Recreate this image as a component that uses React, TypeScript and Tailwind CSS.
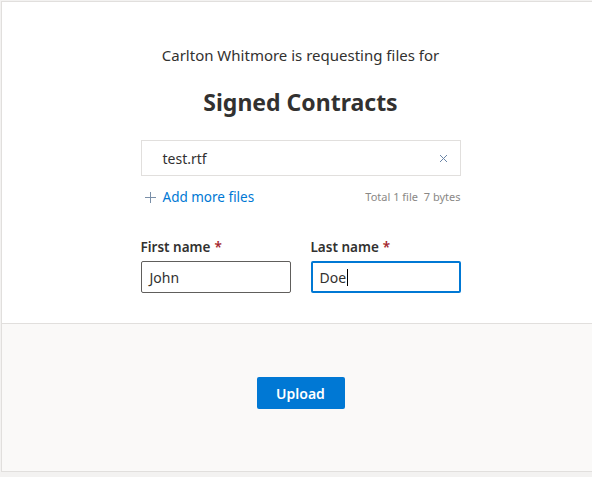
import React from "react";

const font = { fontFamily: '"Noto Sans", "Open Sans", sans-serif' };

const Required = () => <span className="ml-1 text-[#a4262c]">*</span>;

export default function App() {
  return (
    <div className="h-[477px] w-[592px] overflow-hidden bg-[#f3f2f1] pl-px pt-px" style={font}>
      <div className="w-[598px] border border-r-0 border-[#e1dfdd] bg-white">
        <div className="flex flex-col items-center pb-[30px] pt-[43px]">
          <p className="text-[15px] leading-5 text-[#323130]">Carlton Whitmore is requesting files for</p>
          <h1 className="mt-[23px] text-[23px] font-bold leading-7 text-[#323130]">Signed Contracts</h1>

          <div className="mt-[24px] w-[320px]">
            <div className="flex h-9 items-center justify-between border border-[#e1dfdd] pl-[21px] pr-[12px]">
              <span className="text-[14px] text-[#323130]">test.rtf</span>
              <svg width="9" height="9" viewBox="0 0 9 9" className="text-[#6b86a8]">
                <path d="M1 1 L8 8 M8 1 L1 8" stroke="currentColor" strokeWidth="1" />
              </svg>
            </div>

            <div className="mt-[11px] flex h-5 items-center justify-between">
              <div className="flex items-center">
                <svg width="11" height="11" viewBox="0 0 11 11" className="ml-[4px] text-[#7a8fa8]">
                  <path d="M5.5 0 V11 M0 5.5 H11" stroke="currentColor" strokeWidth="1" />
                </svg>
                <span className="ml-[7px] text-[13.5px] text-[#0078d4]">Add more files</span>
              </div>
              <span className="text-[11px] text-[#8a8886]">Total 1 file&nbsp; 7 bytes</span>
            </div>

            <div className="mt-[30px] grid grid-cols-2 gap-5">
              <div>
                <div className="text-[13.5px] font-semibold leading-5 text-[#323130]">
                  First name<Required />
                </div>
                <div className="mt-[4px] flex h-8 items-center rounded-[2px] border border-[#605e5c] px-[8px] text-[14px] text-[#323130]">
                  John
                </div>
              </div>
              <div>
                <div className="text-[13.5px] font-semibold leading-5 text-[#323130]">
                  Last name<Required />
                </div>
                <div className="mt-[4px] flex h-8 items-center rounded-[2px] border-2 border-[#0078d4] px-[7px] text-[14px] text-[#323130]">
                  Doe
                  <span className="ml-px h-[17px] w-px bg-[#000]" />
                </div>
              </div>
            </div>
          </div>
        </div>

        <div className="flex justify-center border-t border-[#e1dfdd] bg-[#faf9f8] pb-[62px] pt-[53px]">
          <button className="h-8 w-[88px] rounded-[2px] bg-[#0078d4] text-[14px] font-semibold text-white">
            Upload
          </button>
        </div>
      </div>
    </div>
  );
}
